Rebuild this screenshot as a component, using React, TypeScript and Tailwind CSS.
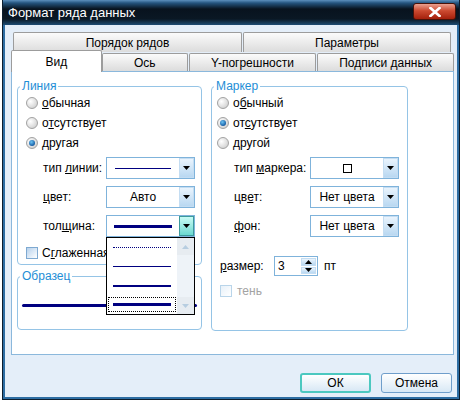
import React from 'react';

const font = "font-['Liberation_Sans',Arial,sans-serif]";

const Arrow = ({ color = '#000' }: { color?: string }) => (
  <svg width="7" height="4" viewBox="0 0 7 4">
    <polygon points="0,0 7,0 3.5,4" fill={color} />
  </svg>
);

const DropBtn = ({ hot }: { hot?: boolean }) => (
  <div
    className={
      hot
        ? 'w-[15px] h-full border border-[#3c9a9c] bg-linear-to-b from-[#c8fbf5] to-[#6ad9d0] flex items-center justify-center'
        : 'w-[15px] h-full border border-[#c4ddf2] bg-linear-to-b from-[#eaf4fd] to-[#b9d8f1] flex items-center justify-center'
    }
  >
    <Arrow />
  </div>
);

const Combo = ({ children, hot }: { children?: React.ReactNode; hot?: boolean }) => (
  <div className="w-[89px] h-[22px] border border-[#7fb3db] bg-white flex">
    <div className="flex-1 flex items-center justify-center">{children}</div>
    <DropBtn hot={hot} />
  </div>
);

const Radio = ({ checked }: { checked?: boolean }) => (
  <span className="w-[12px] h-[12px] shrink-0 rounded-full border border-[#a2a2a2] bg-[radial-gradient(circle_at_35%_35%,#ffffff,#dadada_65%,#c2c2c2)] flex items-center justify-center">
    {checked && (
      <span className="w-[6px] h-[6px] rounded-full bg-[radial-gradient(circle_at_40%_35%,#6cc4f4,#0a4f9a_80%)]" />
    )}
  </span>
);

const Check = ({ disabled }: { disabled?: boolean }) => (
  <span
    className={
      disabled
        ? 'w-[12px] h-[12px] shrink-0 border border-[#b9d5ea] bg-linear-to-br from-[#e8f1f9] to-white'
        : 'w-[12px] h-[12px] shrink-0 border border-[#7ea9d1] bg-linear-to-br from-[#b6d1ec] to-white'
    }
  />
);

const Legend = ({ children }: { children: React.ReactNode }) => (
  <legend className="ml-[2px] px-[2px] text-[12px] leading-[13px] text-[#1e8ed6]">{children}</legend>
);

const RadioRow = ({ checked, children }: { checked?: boolean; children: React.ReactNode }) => (
  <div className="h-[20px] flex items-center gap-[4px]">
    <Radio checked={checked} />
    <span>{children}</span>
  </div>
);

const LineItem = ({ h, dotted, focus }: { h: number; dotted?: boolean; focus?: boolean }) => (
  <div className="h-[19px] flex items-center px-[1px]">
    <div
      className={
        focus
          ? 'w-[68px] h-[15px] outline-1 outline-dotted outline-black -outline-offset-1 flex items-center px-[5px]'
          : 'w-[68px] h-[15px] flex items-center px-[5px]'
      }
    >
      {dotted ? (
        <div className="w-full border-t border-dotted border-[#000080]" />
      ) : (
        <div className={h === 1 ? 'w-full h-[1px] bg-[#000080]' : h === 2 ? 'w-full h-[2px] bg-[#000080]' : 'w-full h-[3px] bg-[#000080]'} />
      )}
    </div>
  </div>
);

const Tab = ({ children, w }: { children: React.ReactNode; w: string }) => (
  <div
    className={`${w} h-[18px] border border-b-0 border-[#9c9c9c] rounded-t-[2px] bg-linear-to-b from-[#fbfbfb] to-[#dcdcdc] flex items-center justify-center`}
  >
    {children}
  </div>
);

export default function App() {
  return (
    <div className={`w-[463px] h-[402px] bg-white overflow-hidden text-[12px] text-black ${font}`}>
      <div className="ml-[2px] w-[458px] h-[400px] flex flex-col border border-t-0 border-[#0c1d2e]">
        {/* title bar */}
        <div className="h-[25px] shrink-0 flex items-start bg-[linear-gradient(to_bottom,#5d90bd_0px,#24547e_3px,#08131e_9px,#0a1824_19px,#1d4c74_25px)] pl-[5px] pr-[3px]">
          <span className="mt-[5px] text-[13px] leading-[15px] text-white">Формат ряда данных</span>
          <div className="ml-auto mt-[3px] w-[43px] h-[17px] rounded-[3px] border border-[#4a1208] bg-[linear-gradient(to_bottom,#eaa190,#cc4a30_45%,#a4200c)] flex items-center justify-center">
            <svg width="12" height="10" viewBox="0 0 12 10">
              <path d="M1.5 1 L10.5 9 M10.5 1 L1.5 9" stroke="#fff" strokeWidth="2.6" strokeLinecap="square" />
            </svg>
          </div>
        </div>

        {/* client */}
        <div className="flex-1 flex flex-col border-x-2 border-b-2 border-[#2d6da3] bg-[#e4eef9] pl-[6px] pr-[3px] pt-[7px]">
          {/* back row tabs */}
          <div className="flex ml-[2px] h-[20px] gap-[1px]">
            <div className="w-[229px] h-[20px] border border-b-0 border-[#9c9c9c] rounded-t-[2px] bg-linear-to-b from-[#fbfbfb] to-[#dcdcdc] flex items-center justify-center">
              Порядок рядов
            </div>
            <div className="w-[208px] h-[20px] border border-b-0 border-[#9c9c9c] rounded-t-[2px] bg-linear-to-b from-[#fbfbfb] to-[#dcdcdc] flex items-center justify-center">
              Параметры
            </div>
          </div>
          {/* front row tabs */}
          <div className="flex items-end h-[21px] -mt-[2px] relative z-10">
            <div className="w-[91px] h-[22px] -mb-[1px] border border-b-0 border-[#9c9c9c] rounded-t-[2px] bg-white flex items-center justify-center">
              Вид
            </div>
            <Tab w="w-[86px] ml-[0px]">Ось</Tab>
            <Tab w="w-[128px] ml-[1px]">Y-погрешности</Tab>
            <Tab w="w-[137px] ml-[1px]">Подписи данных</Tab>
          </div>

          {/* panel */}
          <div className="w-[443px] h-[284px] border border-[#8bb8dc] bg-white flex gap-[9px] pl-[5px] pt-[8px]">
            {/* left column */}
            <div className="w-[185px] flex flex-col">
              <fieldset className="h-[185px] border border-[#95c4e6] rounded-[4px]">
                <Legend>Линия</Legend>
                <div className="flex flex-col pl-[8px]">
                  <RadioRow>
                    <u>о</u>бычная
                  </RadioRow>
                  <RadioRow>
                    о<u>т</u>сутствует
                  </RadioRow>
                  <RadioRow checked>другая</RadioRow>
                </div>
                <div className="flex flex-col gap-[7px] mt-[4px] pl-[25px]">
                  <div className="flex items-center h-[22px]">
                    <span className="w-[63px]">
                      тип <u>л</u>инии:
                    </span>
                    <Combo>
                      <div className="w-[56px] h-[1px] bg-[#000080]" />
                    </Combo>
                  </div>
                  <div className="flex items-center h-[22px]">
                    <span className="w-[63px]">
                      <u>ц</u>вет:
                    </span>
                    <Combo>Авто</Combo>
                  </div>
                  <div className="flex items-center h-[22px]">
                    <span className="w-[63px]">
                      тол<u>щ</u>ина:
                    </span>
                    <div className="relative z-20">
                      <Combo hot>
                        <div className="w-[58px] h-[3px] bg-[#000080]" />
                      </Combo>
                      {/* open list */}
                      <div className="absolute left-0 top-[22px] w-[89px] h-[78px] border border-black bg-white flex">
                        <div className="flex-1 flex flex-col">
                          <LineItem h={1} dotted />
                          <LineItem h={1} />
                          <LineItem h={2} />
                          <LineItem h={3} focus />
                        </div>
                        <div className="w-[17px] h-full bg-[#eef3f8] flex flex-col justify-between items-center">
                          <div className="w-[17px] h-[17px] bg-[#e7ecf1] flex items-center justify-center">
                            <svg width="7" height="4" viewBox="0 0 7 4">
                              <polygon points="0,4 7,4 3.5,0" fill="#b7cde0" />
                            </svg>
                          </div>
                          <div className="w-[17px] h-[17px] bg-[#e7ecf1] flex items-center justify-center">
                            <Arrow color="#b7cde0" />
                          </div>
                        </div>
                      </div>
                    </div>
                  </div>
                </div>
                <div className="mt-[8px] h-[16px] pl-[8px] flex items-center gap-[4px]">
                  <Check />
                  <span>
                    С<u>г</u>лаженная линия
                  </span>
                </div>
              </fieldset>

              <fieldset className="mt-[5px] h-[60px] border border-[#95c4e6] rounded-[4px]">
                <Legend>Образец</Legend>
                <div className="h-[44px] flex items-center px-[4px]">
                  <div className="w-full h-[3px] rounded-full bg-[#000080]" />
                </div>
              </fieldset>
            </div>

            {/* right column */}
            <fieldset className="w-[197px] h-[251px] border border-[#95c4e6] rounded-[4px]">
              <Legend>Маркер</Legend>
              <div className="flex flex-col pl-[5px]">
                <RadioRow>
                  о<u>б</u>ычный
                </RadioRow>
                <RadioRow checked>
                  от<u>с</u>утствует
                </RadioRow>
                <RadioRow>другой</RadioRow>
              </div>
              <div className="flex flex-col gap-[7px] mt-[4px] pl-[22px]">
                <div className="flex items-center h-[22px]">
                  <span className="w-[76px]">
                    тип <u>м</u>аркера:
                  </span>
                  <Combo>
                    <span className="w-[9px] h-[9px] border border-black" />
                  </Combo>
                </div>
                <div className="flex items-center h-[22px]">
                  <span className="w-[76px]">
                    цв<u>е</u>т:
                  </span>
                  <Combo>Нет цвета</Combo>
                </div>
                <div className="flex items-center h-[22px]">
                  <span className="w-[76px]">
                    <u>ф</u>он:
                  </span>
                  <Combo>Нет цвета</Combo>
                </div>
              </div>
              <div className="mt-[19px] h-[20px] pl-[8px] flex items-center">
                <span className="w-[54px]">
                  <u>р</u>азмер:
                </span>
                <div className="w-[44px] h-[20px] border border-[#7fb3db] bg-white flex">
                  <span className="flex-1 pl-[3px] flex items-center">3</span>
                  <div className="w-[15px] flex flex-col my-[1px] mr-[1px] gap-[1px]">
                    <div className="flex-1 border border-[#c4ddf2] bg-linear-to-b from-[#eaf4fd] to-[#b9d8f1] flex items-center justify-center">
                      <svg width="7" height="4" viewBox="0 0 7 4">
                        <polygon points="0,4 7,4 3.5,0" fill="#000" />
                      </svg>
                    </div>
                    <div className="flex-1 border border-[#c4ddf2] bg-linear-to-b from-[#eaf4fd] to-[#b9d8f1] flex items-center justify-center">
                      <Arrow />
                    </div>
                  </div>
                </div>
                <span className="ml-[6px]">пт</span>
              </div>
              <div className="mt-[8px] h-[13px] pl-[8px] flex items-center gap-[5px]">
                <Check disabled />
                <span className="text-[#a3a3a3]">тень</span>
              </div>
            </fieldset>
          </div>

          {/* buttons */}
          <div className="flex justify-end gap-[10px] mt-[18px] pr-[2px]">
            <button className="w-[71px] h-[20px] rounded-[3px] border-2 border-[#4cc8c0] bg-linear-to-b from-white to-[#d8e8f5] flex items-center justify-center">
              ОК
            </button>
            <button className="w-[71px] h-[20px] rounded-[3px] border border-[#6f9ecb] bg-linear-to-b from-white to-[#d8e8f5] flex items-center justify-center">
              Отмена
            </button>
          </div>
        </div>
      </div>
    </div>
  );
}
